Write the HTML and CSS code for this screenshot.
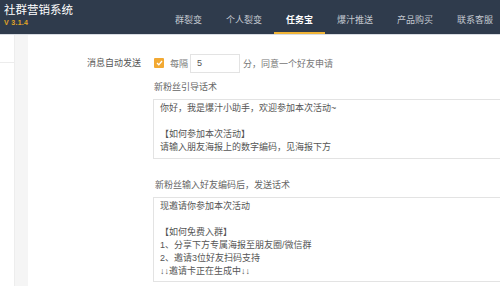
FILE: index.html
```html
<!DOCTYPE html>
<html lang="zh-CN">
    <head>
        <meta charset="UTF-8">
        <title>社群营销系统</title>
        <link rel="stylesheet" href="styles.css">
    </head>
    <body>
        <header class="topbar">
            <div class="brand">
                <div class="brand-name">社群营销系统</div>
                <div class="brand-version">V 3.1.4</div>
            </div>
            <nav class="nav">
                <a class="nav-item">群裂变</a>
                <a class="nav-item">个人裂变</a>
                <a class="nav-item active">任务宝</a>
                <a class="nav-item">爆汁推送</a>
                <a class="nav-item">产品购买</a>
                <a class="nav-item">联系客服</a>
            </nav>
        </header>

        <div class="layout">
            <aside class="sidebar">
                <div class="side-item"></div>
            </aside>
            <div class="gutter"></div>

            <main class="form">
                <div class="form-row">
                    <label class="form-label">消息自动发送</label>
                    <div class="form-field inline">
                        <span class="checkbox">
                            <svg width="7" height="6" viewBox="0 0 7 6"><path d="M1 3l1.8 1.8L6 1" fill="none" stroke="#fff" stroke-width="1.3"/></svg>
                        </span>
                        <span class="muted">每隔</span>
                        <input class="num-input" type="text" value="5">
                        <span class="muted">分，同意一个好友申请</span>
                    </div>
                </div>

                <div class="form-row">
                    <div class="form-label"></div>
                    <div class="form-field">
                        <p class="field-title">新粉丝引导话术</p>
                        <textarea class="script-box box-short">你好，我是爆汁小助手，欢迎参加本次活动~

【如何参加本次活动】
请输入朋友海报上的数字编码，见海报下方</textarea>
                    </div>
                </div>

                <div class="form-row">
                    <div class="form-label"></div>
                    <div class="form-field">
                        <p class="field-title spaced">新粉丝输入好友编码后，发送话术</p>
                        <textarea class="script-box box-long">现邀请你参加本次活动

【如何免费入群】
1、分享下方专属海报至朋友圈/微信群
2、邀请3位好友扫码支持
↓↓邀请卡正在生成中↓↓</textarea>
                    </div>
                </div>
            </main>
        </div>
    </body>
</html>
```

FILE: styles.css
```css
* {
    margin: 0; padding: 0; box-sizing: border-box;
}

html, body {
    width: 100%;
    height: 100%;
    background-color: #fff;
    color: #666;
    font-family: "Liberation Sans", "Noto Sans CJK SC", sans-serif;
    font-size: 9px;
    overflow: hidden;
}

.topbar {
    display: flex;
    align-items: stretch;
    height: 35px;
    background-color: #2f3b4c;
    border-bottom: 1px solid #d8dce2;
}

.brand {
    padding: 2px 0 0 4px;
    width: 163px;
    flex-shrink: 0;
}

.brand-name {
    color: #fff;
    font-size: 11.5px;
    line-height: 17px;
}

.brand-version {
    color: #e0a526;
    font-size: 7px;
    font-weight: bold;
    line-height: 8px;
    letter-spacing: 0.3px;
}

.nav {
    display: flex;
    flex-shrink: 0;
}

.nav-item {
    display: block;
    padding: 13px 12px 0;
    color: #c3c8d0;
    font-size: 9px;
    line-height: 14px;
    border-bottom: 2px solid transparent;
    white-space: nowrap;
}

.nav-item.active {
    color: #fff;
    font-weight: bold;
    border-bottom-color: #f0b436;
}

.layout {
    display: flex;
    height: calc(100% - 35px);
}

.sidebar {
    width: 14px;
    flex-shrink: 0;
}

.side-item {
    height: 28px;
    border-bottom: 1px solid #ececec;
}

.gutter {
    width: 14px;
    flex-shrink: 0;
    background-color: #f5f5f5;
    border-left: 1px solid #ededed;
}

.form {
    flex: 1;
    min-width: 0;
    padding-top: 19px;
}

.form-row {
    display: flex;
}

.form-label {
    width: 125px;
    flex-shrink: 0;
    padding-right: 12px;
    text-align: right;
    color: #555;
    line-height: 18px;
}

.form-field {
    flex: 1;
    min-width: 0;
}

.form-field.inline {
    display: flex;
    align-items: center;
    height: 18px;
}

.checkbox {
    display: flex;
    align-items: center;
    justify-content: center;
    width: 10px;
    height: 10px;
    margin: 0 6px 0 1px;
    background-color: #f2a933;
    border-radius: 1px;
}

.muted {
    color: #777;
}

.num-input {
    width: 50px;
    height: 19px;
    margin: 0 3px 0 2px;
    padding: 0 6px;
    border: 1px solid #e3e3e3;
    font-family: inherit;
    font-size: 9px;
    color: #555;
    outline: none;
}

.field-title {
    margin-top: 8px;
    line-height: 14px;
    color: #666;
    padding-left: 1px;
}

.field-title.spaced {
    margin-top: 19px;
    padding-left: 2px;
}

.script-box {
    display: block;
    width: calc(100% + 10px);
    margin-top: 5px;
    padding: 2px 6px 4px;
    border: 1px solid #e3e3e3;
    font-family: inherit;
    font-size: 9px;
    line-height: 13px;
    color: #555;
    resize: none;
    overflow: hidden;
    outline: none;
}

.box-short {
    height: 60px;
}

.box-long {
    height: 85px;
}
```
